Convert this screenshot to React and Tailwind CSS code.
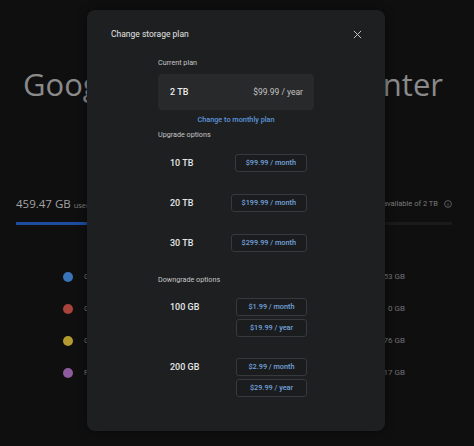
import React from 'react';

const LEGEND = [
    { id: 'drive', label: 'Google Drive', value: '41.53 GB', dot: 'bg-[#3a74b8]' },
    { id: 'gmail', label: 'Gmail', value: '0 GB', dot: 'bg-[#a8423b]' },
    { id: 'photos', label: 'Google Photos', value: '15.76 GB', dot: 'bg-[#b59a2f]' },
    { id: 'family', label: 'Family storage', value: '2.17 GB', dot: 'bg-[#8f5b9f]' },
];

const UPGRADES = [
    { size: '10 TB', prices: ['$99.99 / month'] },
    { size: '20 TB', prices: ['$199.99 / month'] },
    { size: '30 TB', prices: ['$299.99 / month'] },
];

const DOWNGRADES = [
    { size: '100 GB', prices: ['$1.99 / month', '$19.99 / year'] },
    { size: '200 GB', prices: ['$2.99 / month', '$29.99 / year'] },
];

function PlanRow({ plan }) {
    return (
        <div className="flex items-start justify-between pl-[12px] pr-[7px]">
            <span className="leading-[18px] text-[9px] font-medium text-[#e6e6e6]">{plan.size}</span>
            <div className="flex flex-col items-end gap-[3px]">
                {plan.prices.map((price) => (
                    <button
                        key={price}
                        className="h-[18px] min-w-[71px] px-[10px] rounded-[3px] border border-[#38393c] bg-[#1b1c1e] text-[7.3px] font-medium leading-[16px] text-[#72a2dc]"
                    >
                        {price}
                    </button>
                ))}
            </div>
        </div>
    );
}

export default function App() {
    return (
        <div className="relative w-[474px] h-[446px] overflow-hidden bg-[#0f0f10] font-['Roboto',sans-serif]">
            {/* page behind the dialog */}
            <div className="flex justify-between pt-[69px] pl-[23px] pr-[31px] font-['Open_Sans',sans-serif] text-[31px] leading-[31px] text-[#8a8a8b]">
                <span>Google One</span>
                <span>Storage center</span>
            </div>

            <div className="mt-[96px] ml-[16px] mr-[22px] h-[16px] flex items-center justify-between">
                <div className="flex items-baseline gap-[3px] font-['Open_Sans',sans-serif]">
                    <span className="text-[11.5px] text-[#a3a3a3]">459.47 GB</span>
                    <span className="text-[7.5px] text-[#7c7c7c]">used</span>
                </div>
                <div className="flex items-center gap-[6px]">
                    <span className="text-[7.5px] text-[#7a7a7a]">1.55 TB available of 2 TB</span>
                    <svg width="8" height="8" viewBox="0 0 16 16" fill="none" stroke="#6f6f6f" strokeWidth="1.6">
                        <circle cx="8" cy="8" r="6.8" />
                        <path d="M8 7v4.5M8 4.6v.2" />
                    </svg>
                </div>
            </div>
            <div className="mt-[10px] ml-[16px] mr-[22px] h-[3px] bg-[#1a1a1b] flex">
                <div className="w-[23%] h-full bg-[#1b4c9f]" />
            </div>

            <div className="mt-[36px] flex flex-col">
                {LEGEND.map((item) => (
                    <div key={item.id} className="h-[32px] flex items-center justify-between pl-[63px] pr-[69px]">
                        <div className="flex items-center gap-[11px]">
                            <span className={`w-[10px] h-[10px] rounded-full ${item.dot}`} />
                            <span className="text-[8px] text-[#7a7a7a]">{item.label}</span>
                        </div>
                        <span className="text-[8px] text-[#727272]">{item.value}</span>
                    </div>
                ))}
            </div>

            {/* dialog */}
            <div className="absolute left-[87px] top-[10px] w-[298px] h-[421px] rounded-[8px] bg-[#1e1f21] shadow-[0_0_10px_rgba(0,0,0,0.45)] flex flex-col">
                <div className="h-[48px] flex items-center justify-between pl-[24px] pr-[24px]">
                    <h2 className="text-[8.5px] leading-[12px] text-[#e3e3e3]">Change storage plan</h2>
                    <svg width="9" height="9" viewBox="0 0 10 10" stroke="#c6c6c6" strokeWidth="1.1" className="mr-[-1px]">
                        <path d="M1 1l8 8M9 1l-8 8" />
                    </svg>
                </div>

                <div className="w-[156px] mx-auto flex flex-col">
                    <p className="h-[10px] leading-[10px] text-[7.2px] text-[#c6c6c6]">Current plan</p>
                    <div className="mt-[6px] h-[36px] rounded-[4px] bg-[#28292b] flex items-center justify-between pl-[12px] pr-[11px]">
                        <span className="leading-[12px] text-[9px] font-medium text-[#ececec]">2 TB</span>
                        <span className="leading-[12px] text-[8.5px] text-[#c2c2c2]">$99.99 / year</span>
                    </div>
                    <p className="mt-[5px] h-[10px] leading-[10px] text-center text-[7.3px] font-medium text-[#5b95da]">Change to monthly plan</p>
                    <p className="mt-[5px] h-[10px] leading-[10px] text-[7.2px] text-[#c6c6c6]">Upgrade options</p>

                    <div className="mt-[14px] flex flex-col gap-[22px]">
                        {UPGRADES.map((plan) => (
                            <PlanRow key={plan.size} plan={plan} />
                        ))}
                    </div>

                    <p className="mt-[23px] h-[10px] leading-[10px] text-[7.2px] text-[#c6c6c6]">Downgrade options</p>

                    <div className="mt-[13px] flex flex-col gap-[21px]">
                        {DOWNGRADES.map((plan) => (
                            <PlanRow key={plan.size} plan={plan} />
                        ))}
                    </div>
                </div>
            </div>
        </div>
    );
}
